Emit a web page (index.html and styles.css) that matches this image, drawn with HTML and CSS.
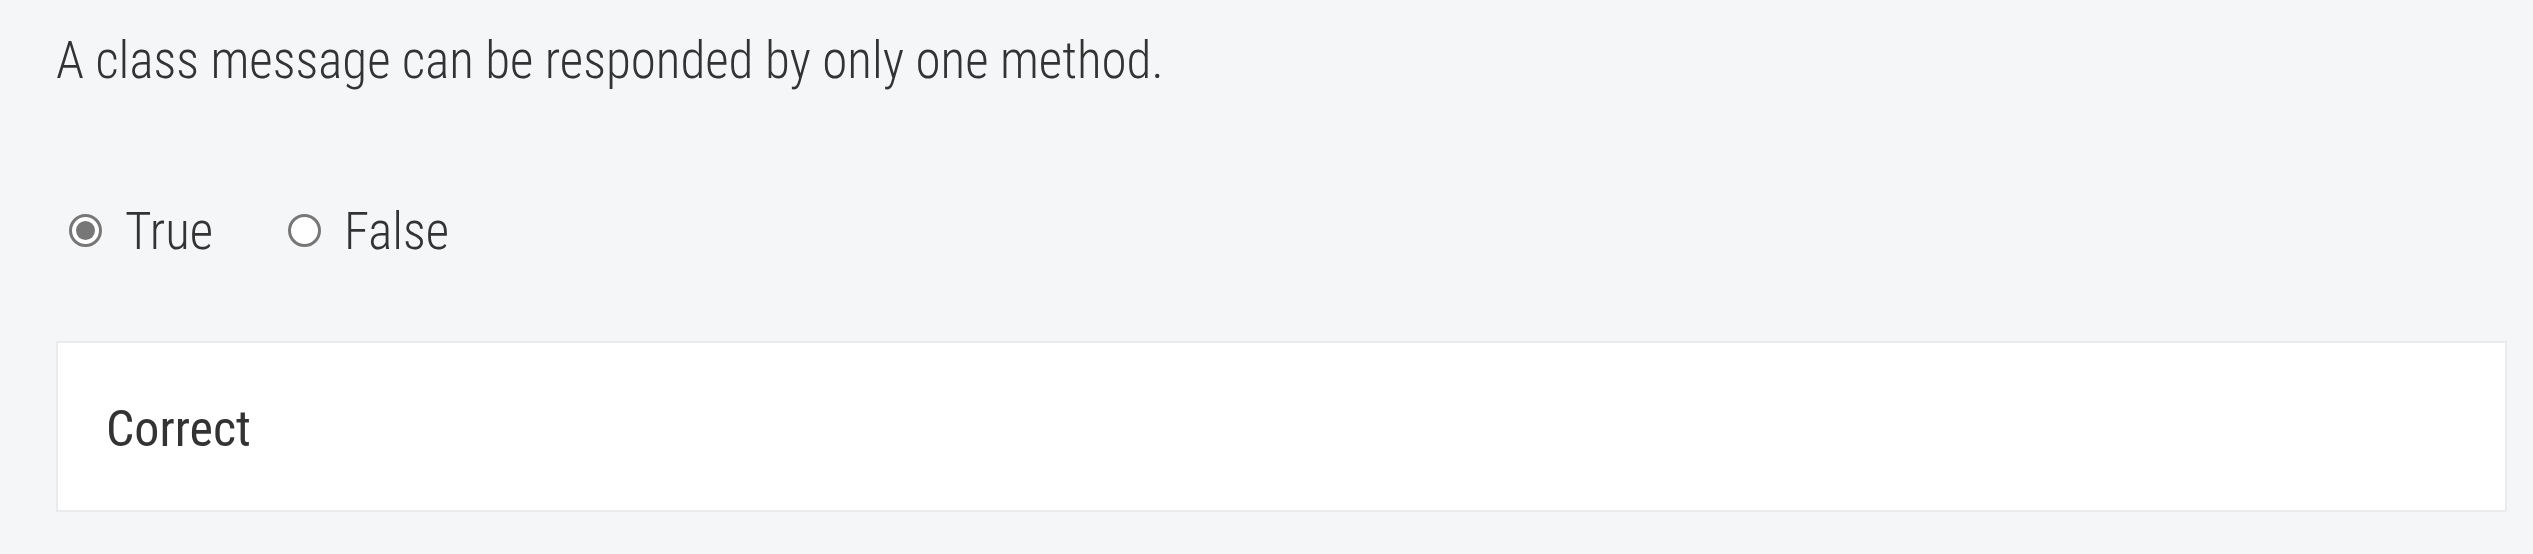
FILE: index.html
```html
<!DOCTYPE html>
<html lang="en">
<head>
<meta charset="utf-8">
<title>Question</title>
<link rel="stylesheet" href="styles.css">
</head>
<body>
<main class="question">
  <p class="prompt">A class message can be responded by only one method.</p>
  <div class="options">
    <label class="option">
      <span class="radio checked"></span>
      <span class="option-text">True</span>
    </label>
    <label class="option">
      <span class="radio"></span>
      <span class="option-text">False</span>
    </label>
  </div>
  <section class="feedback">
    <p class="feedback-text">Correct</p>
  </section>
</main>
</body>
</html>
```
FILE: styles.css
```css
html, body {
  margin: 0;
  padding: 0;
  background: #f5f6f8;
}
body {
  font-family: Roboto, "Open Sans", sans-serif;
  font-stretch: 75%;
  color: #333333;
}
.question {
  padding: 30px 26px 0 56px;
}
.prompt {
  margin: 0;
  font-size: 51px;
  font-weight: 300;
  line-height: 61px;
}
.options {
  display: flex;
  align-items: center;
  gap: 75px;
  margin-top: 110px;
  padding-left: 13px;
}
.option {
  display: flex;
  align-items: center;
  gap: 23px;
  font-size: 51px;
  font-weight: 300;
  line-height: 61px;
}
.radio {
  box-sizing: border-box;
  width: 33px;
  height: 33px;
  border: 3px solid #777777;
  border-radius: 50%;
  background: #ffffff;
  display: flex;
  align-items: center;
  justify-content: center;
  margin-top: -3px;
}
.radio.checked::after {
  content: "";
  width: 19px;
  height: 19px;
  border-radius: 50%;
  background: #777777;
}
.feedback {
  margin-top: 79px;
  background: #ffffff;
  border: 2px solid #e9ebed;
  padding: 55px 48px 50px;
}
.feedback-text {
  margin: 0;
  font-size: 50px;
  font-weight: 400;
  line-height: 62px;
}
```
